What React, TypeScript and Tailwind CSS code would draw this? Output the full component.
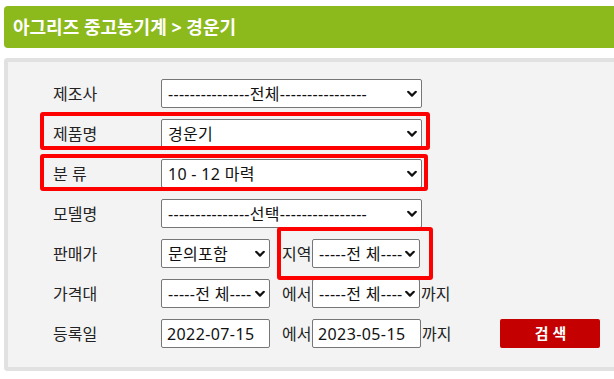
import React from "react";

function Chevron() {
  return (
    <svg
      className="pointer-events-none absolute right-[5px] top-1/2 -translate-y-1/2"
      width="10"
      height="7"
      viewBox="0 0 10 7"
      fill="none"
    >
      <path d="M1.2 1.3 5 5.1 8.8 1.3" stroke="#111" strokeWidth="2.2" strokeLinecap="round" strokeLinejoin="round" />
    </svg>
  );
}

function Select({ w, value }: { w: string; value: string }) {
  return (
    <div className={`relative h-[29px] ${w}`}>
      <select
        defaultValue={value}
        className="h-full w-full appearance-none rounded-[2px] border border-[#767676] bg-white pl-[6px] pr-[10px] text-[16px] tracking-[0.3px] text-[#111] outline-none"
      >
        <option value={value}>{value}</option>
      </select>
      <Chevron />
    </div>
  );
}

function DateInput({ value }: { value: string }) {
  return (
    <input
      readOnly
      value={value}
      className="h-[29px] w-[109px] rounded-[2px] border border-[#767676] bg-white pl-[5px] text-[16px] tracking-[0.4px] text-[#111] outline-none"
    />
  );
}

const DASH_ALL = "---------------전체----------------";
const DASH_PICK = "---------------선택----------------";
const SHORT_ALL = "-----전 체----";

export default function App() {
  return (
    <div
      className="relative h-[379px] w-[614px] overflow-hidden bg-white pt-[6px] pl-[4px]"
      style={{ fontFamily: "'Noto Sans', 'Noto Sans CJK KR', sans-serif" }}
    >
      {/* title bar */}
      <div className="flex h-[42px] items-center rounded-l-[4px] bg-[#8cb91c] pl-[9px] text-[18px] font-bold text-white">
        아그리즈 중고농기계 &gt; 경운기
      </div>

      {/* search panel */}
      <div className="mt-[10px] h-[313px] rounded-l-[4px] border-[4px] border-r-0 border-[#e1e1e1] bg-[#f3f3f3] pt-[17px] pl-[45px] text-[16px] text-[#222]">
        <div className="grid grid-cols-[108px_1fr] gap-y-[11px] items-center">
          <div className="leading-none">제조사</div>
          <Select w="w-[261px]" value={DASH_ALL} />

          <div className="leading-none">제품명</div>
          <Select w="w-[261px]" value="경운기" />

          <div className="leading-none">분 류</div>
          <Select w="w-[261px]" value="10 - 12 마력" />

          <div className="leading-none">모델명</div>
          <Select w="w-[261px]" value={DASH_PICK} />

          <div className="leading-none">판매가</div>
          <div className="flex items-center">
            <Select w="w-[109px]" value="문의포함" />
            <span className="ml-[12px] w-[30px] leading-none">지역</span>
            <Select w="w-[108px]" value={SHORT_ALL} />
          </div>

          <div className="leading-none">가격대</div>
          <div className="flex items-center">
            <Select w="w-[109px]" value={SHORT_ALL} />
            <span className="ml-[12px] w-[30px] leading-none">에서</span>
            <Select w="w-[108px]" value={SHORT_ALL} />
            <span className="ml-[1px] leading-none">까지</span>
          </div>

          <div className="leading-none">등록일</div>
          <div className="flex items-center">
            <DateInput value="2022-07-15" />
            <span className="ml-[12px] w-[30px] leading-none">에서</span>
            <DateInput value="2023-05-15" />
            <span className="ml-[1px] leading-none">까지</span>
            <button className="ml-[49px] h-[29px] w-[100px] rounded-[2px] bg-[#c40000] text-[15px] font-bold text-white">
              검 색
            </button>
          </div>
        </div>
      </div>

      {/* red annotation boxes */}
      <div className="pointer-events-none absolute left-[40px] top-[112px] h-[38px] w-[390px] rounded-[3px] border-[4px] border-[#ff0000]" />
      <div className="pointer-events-none absolute left-[40px] top-[154px] h-[37px] w-[388px] rounded-[3px] border-[4px] border-[#ff0000]" />
      <div className="pointer-events-none absolute left-[277px] top-[227px] h-[53px] w-[156px] rounded-[3px] border-[4px] border-[#ff0000]" />
    </div>
  );
}
